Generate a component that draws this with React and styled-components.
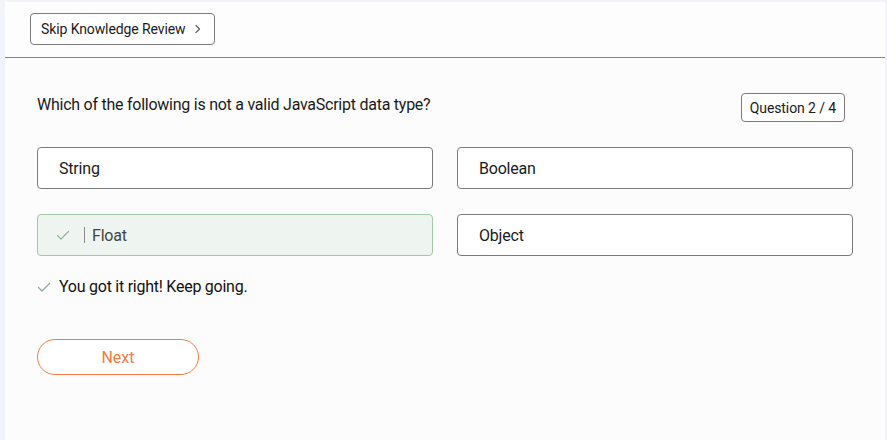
import React from "react";
import styled, { createGlobalStyle } from "styled-components";

const Global = createGlobalStyle`
  html, body { margin: 0; padding: 0; background: #f3f4f9; }
  body { font-family: Roboto, "Liberation Sans", Arial, sans-serif; color: #1b1b1b; }
  * { box-sizing: border-box; }
`;

const Frame = styled.div`
  height: 440px;
  padding: 2px 2px 0 5px;
`;

const Panel = styled.div`
  height: 100%;
  background: #fcfcfc;
  display: flex;
  flex-direction: column;
`;

const Header = styled.header`
  height: 56px;
  padding: 11px 25px 0;
  border-bottom: 1px solid #858585;
  background: #fdfdfd;
`;

const SkipButton = styled.button`
  display: inline-flex;
  align-items: center;
  gap: 9px;
  height: 32px;
  padding: 0 12px 0 10px;
  border: 1px solid #7a7a7a;
  border-radius: 4px;
  background: #fff;
  font-family: inherit;
  font-size: 14px;
  color: #1b1b1b;
  letter-spacing: -0.1px;
`;

const Body = styled.main`
  padding: 34px 40px 0 32px;
  display: flex;
  flex-direction: column;
`;

const QuestionRow = styled.div`
  display: flex;
  justify-content: space-between;
  align-items: flex-start;
`;

const QuestionText = styled.p`
  margin: 0;
  padding-top: 1px;
  font-size: 16px;
  line-height: 24px;
  letter-spacing: -0.25px;
  color: #1b1b1b;
`;

const Counter = styled.div`
  height: 29px;
  margin-top: 1px;
  padding: 0 8px;
  display: flex;
  align-items: center;
  border: 1px solid #7a7a7a;
  border-radius: 4px;
  font-size: 14px;
  letter-spacing: -0.1px;
  color: #1b1b1b;
  background: #fff;
`;

const Options = styled.div`
  margin-top: 25px;
  margin-right: -8px;
  display: grid;
  grid-template-columns: 1fr 1fr;
  column-gap: 24px;
  row-gap: 25px;
`;

const Option = styled.div`
  height: 42px;
  display: flex;
  align-items: center;
  padding: 0 21px;
  border: 1px solid ${(p) => (p.$correct ? "#a3c9a8" : "#7a7a7a")};
  border-radius: 4px;
  background: ${(p) => (p.$correct ? "#eef5f0" : "#fff")};
  font-size: 16px;
  letter-spacing: -0.2px;
  color: ${(p) => (p.$correct ? "#444" : "#1b1b1b")};
`;

const CheckWrap = styled.span`
  display: inline-flex;
  margin-left: -3px;
  margin-right: 14px;
`;

const Bar = styled.span`
  width: 1px;
  height: 16px;
  background: #8a8a8a;
  margin-right: 7px;
`;

const Feedback = styled.div`
  margin-top: 21px;
  display: flex;
  align-items: center;
  gap: 8px;
  font-size: 16px;
  letter-spacing: -0.25px;
  color: #111;
`;

const NextButton = styled.button`
  margin-top: 43px;
  width: 162px;
  height: 36px;
  border: 1px solid #f47a40;
  border-radius: 18px;
  background: #fff;
  color: #f47a40;
  font-family: inherit;
  font-size: 16px;
`;

const Check = ({ color = "#8fb898", size = 14 }) => (
  <svg width={size} height={size} viewBox="0 0 14 14" fill="none">
    <path d="M1.5 7.5 L5 11 L12.5 3.5" stroke={color} strokeWidth="1.2" strokeLinecap="round" strokeLinejoin="round" />
  </svg>
);

const Chevron = () => (
  <svg width="8" height="10" viewBox="0 0 8 10" fill="none">
    <path d="M2 1.5 L5.5 5 L2 8.5" stroke="#666" strokeWidth="1.3" strokeLinecap="round" strokeLinejoin="round" />
  </svg>
);

const options = [
  { label: "String" },
  { label: "Boolean" },
  { label: "Float", correct: true },
  { label: "Object" },
];

export default function App() {
  return (
    <>
      <Global />
      <Frame>
        <Panel>
          <Header>
            <SkipButton>
              Skip Knowledge Review <Chevron />
            </SkipButton>
          </Header>
          <Body>
            <QuestionRow>
              <QuestionText>Which of the following is not a valid JavaScript data type?</QuestionText>
              <Counter>Question 2 / 4</Counter>
            </QuestionRow>
            <Options>
              {options.map((o) => (
                <Option key={o.label} $correct={o.correct}>
                  {o.correct && (
                    <>
                      <CheckWrap>
                        <Check />
                      </CheckWrap>
                      <Bar />
                    </>
                  )}
                  {o.label}
                </Option>
              ))}
            </Options>
            <Feedback>
              <Check color="#8fa898" />
              You got it right! Keep going.
            </Feedback>
            <div>
              <NextButton>Next</NextButton>
            </div>
          </Body>
        </Panel>
      </Frame>
    </>
  );
}
